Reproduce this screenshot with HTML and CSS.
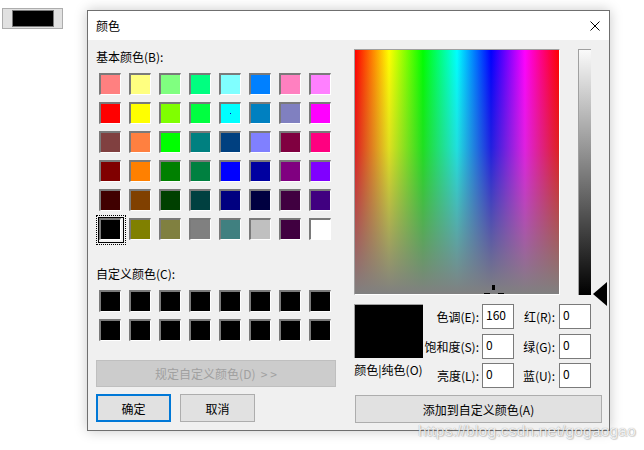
FILE: index.html
```html
<!DOCTYPE html>
<html lang="zh-CN">
<head>
  <meta charset="UTF-8">
  <meta name="viewport" content="width=device-width, initial-scale=1.0">
  <title>颜色</title>
  <link rel="stylesheet" href="styles.css">
</head>
<body>
  <div class="desk">
    <div class="mini">
      <div class="mini-color"></div>
    </div>

    <div class="dialog">
      <div class="titlebar">
        <span>颜色</span>
        <svg class="close" width="10" height="10" viewBox="0 0 10 10">
          <path d="M0.5 0.5 L9.5 9.5 M9.5 0.5 L0.5 9.5" stroke="#000" stroke-width="1"/>
        </svg>
      </div>

      <div class="dlg-body">
        <div class="left">
          <div class="label">基本颜色(B):</div>
          <div class="swatches" id="basicColors"></div>
          <div class="label custom-label">自定义颜色(C):</div>
          <div class="swatches" id="customColors"></div>
          <button class="btn wide" disabled>规定自定义颜色(D)&nbsp;&nbsp;&gt; &gt;</button>
          <div class="btn-row">
            <button class="btn default">确定</button>
            <button class="btn">取消</button>
          </div>
        </div>

        <div class="right">
          <div class="picker">
            <div class="spectrum">
              <span class="cross cross-v"></span>
              <span class="cross cross-l"></span>
              <span class="cross cross-r"></span>
            </div>
            <div class="lum-wrap">
              <div class="lum"></div>
              <div class="arrow"></div>
            </div>
          </div>

          <div class="values">
            <div class="preview-col">
              <div class="preview"></div>
              <div class="preview-label">颜色|纯色(O)</div>
            </div>
            <div class="fields">
              <label>色调(E):</label><input value="160">
              <label>红(R):</label><input value="0">
              <label>饱和度(S):</label><input value="0">
              <label>绿(G):</label><input value="0">
              <label>亮度(L):</label><input value="0">
              <label>蓝(U):</label><input value="0">
            </div>
          </div>

          <button class="btn add">添加到自定义颜色(A)</button>
        </div>
      </div>
    </div>

    <div class="watermark">https://blog.csdn.net/gogaogao</div>
  </div>

  <script>
    const basicColors = [
      "#ff8080", "#ffff80", "#80ff80", "#00ff80", "#80ffff", "#0080ff", "#ff80c0", "#ff80ff",
      "#ff0000", "#ffff00", "#80ff00", "#00ff40", "#00ffff", "#0080c0", "#8080c0", "#ff00ff",
      "#804040", "#ff8040", "#00ff00", "#008080", "#004080", "#8080ff", "#800040", "#ff0080",
      "#800000", "#ff8000", "#008000", "#008040", "#0000ff", "#0000a0", "#800080", "#8000ff",
      "#400000", "#804000", "#004000", "#004040", "#000080", "#000040", "#400040", "#400080",
      "#000000", "#808000", "#808040", "#808080", "#408080", "#c0c0c0", "#400040", "#ffffff"
    ];

    const fillSwatches = (container, colors, selected) => {
      colors.forEach((color, i) => {
        const cell = document.createElement("div");
        cell.className = "cell" + (i === selected ? " selected" : "");
        const swatch = document.createElement("div");
        swatch.className = "swatch" + (i === 12 && selected >= 0 ? " dot" : "");
        swatch.style.backgroundColor = color;
        cell.appendChild(swatch);
        container.appendChild(cell);
      });
    };

    fillSwatches(document.getElementById("basicColors"), basicColors, 40);
    fillSwatches(document.getElementById("customColors"), new Array(16).fill("#000000"), -1);
  </script>
</body>
</html>
```

FILE: styles.css
```css
body {
  margin: 0;
  background-color: #fff;
  font-family: "Noto Sans CJK SC", "Liberation Sans", sans-serif;
  font-size: 12px;
  color: #000;
}

.desk {
  position: relative;
  display: flex;
  align-items: flex-start;
  width: 644px;
  height: 450px;
}

.mini {
  margin: 8px 0 0 2px;
  width: 61px;
  height: 21px;
  box-sizing: border-box;
  background-color: #e1e1e1;
  border: 1px solid #adadad;
  padding: 1px 0 0 9px;
}

.mini-color {
  width: 42px;
  height: 17px;
  box-sizing: border-box;
  background-color: #000;
  border: 1px solid #7a7a7a;
}

/* Dialog window */
.dialog {
  margin: 10px 0 0 24px;
  width: 523px;
  height: 421px;
  box-sizing: border-box;
  border: 1px solid #6f6f6f;
  background-color: #f0f0f0;
  box-shadow: 0 0 12px rgba(0, 0, 0, 0.22);
  display: flex;
  flex-direction: column;
}

.titlebar {
  height: 29px;
  background-color: #fff;
  display: flex;
  align-items: center;
  justify-content: space-between;
  padding: 0 9px 0 8px;
}

.titlebar span {
  line-height: 16px;
}

.dlg-body {
  display: flex;
  padding: 9px 0 0 8px;
}

.left {
  width: 240px;
  display: flex;
  flex-direction: column;
}

.label {
  height: 16px;
  line-height: 16px;
}

.custom-label {
  margin-top: 22px;
}

.swatches {
  margin-top: 5px;
  display: grid;
  grid-template-columns: repeat(8, 30px);
  grid-auto-rows: 29px;
}

.cell {
  position: relative;
  width: 30px;
  height: 29px;
}

.swatch {
  position: relative;
  margin: 3px 0 0 3px;
  width: 22px;
  height: 22px;
  box-sizing: border-box;
  border-top: 2px solid #7a7a7a;
  border-left: 2px solid #7a7a7a;
  border-right: 1px solid #fff;
  border-bottom: 1px solid #fff;
}

.swatch.dot::after {
  content: "";
  position: absolute;
  left: 9px;
  top: 9px;
  width: 1px;
  height: 1px;
  background-color: #0000c0;
}

.cell.selected::before {
  content: "";
  position: absolute;
  left: 0;
  top: 0;
  width: 30px;
  height: 30px;
  box-sizing: border-box;
  border: 1px dotted #000;
}

.cell.selected::after {
  content: "";
  position: absolute;
  left: 2px;
  top: 2px;
  width: 26px;
  height: 26px;
  box-sizing: border-box;
  border: 1px solid #000;
}

.btn {
  font-family: inherit;
  font-size: 12px;
  color: #000;
  background-color: #e1e1e1;
  border: 1px solid #adadad;
  padding: 0;
  height: 28px;
  cursor: pointer;
}

.btn.wide {
  margin-top: 15px;
  height: 27px;
  background-color: #cccccc;
  border-color: #bfbfbf;
  color: #a0a0a0;
  cursor: default;
}

.btn-row {
  margin-top: 7px;
  display: flex;
  gap: 9px;
}

.btn-row .btn {
  width: 75px;
}

.btn.default {
  border: 2px solid #0078d7;
}

/* Right side */
.right {
  margin-left: 18px;
  display: flex;
  flex-direction: column;
}

.picker {
  display: flex;
}

.spectrum {
  position: relative;
  overflow: hidden;
  width: 206px;
  height: 246px;
  box-sizing: border-box;
  border-top: 1px solid #a0a0a0;
  border-left: 1px solid #a0a0a0;
  border-right: 1px solid #fff;
  border-bottom: 1px solid #fff;
  background:
    linear-gradient(to bottom, rgba(128, 128, 128, 0) 0%, rgba(128, 128, 128, 0.25) 40%, #808080 100%),
    linear-gradient(to right, #ff0000 0%, #ffff00 16.7%, #00ff00 33.3%, #00ffff 50%, #0000ff 66.7%, #ff00ff 83.3%, #ff0000 100%);
}

.cross {
  position: absolute;
  background-color: #000;
}

.cross-v {
  left: 137px;
  top: 235px;
  width: 3px;
  height: 5px;
}

.cross-l {
  left: 129px;
  top: 243px;
  width: 6px;
  height: 3px;
}

.cross-r {
  left: 143px;
  top: 243px;
  width: 6px;
  height: 3px;
}

.lum-wrap {
  position: relative;
  margin-left: 18px;
  width: 30px;
  height: 246px;
}

.lum {
  width: 13px;
  height: 246px;
  box-sizing: border-box;
  border-top: 1px solid #a0a0a0;
  border-left: 1px solid #a0a0a0;
  background: linear-gradient(to bottom, #fafafa, #000);
}

.arrow {
  position: absolute;
  left: 15px;
  top: 233px;
  width: 0;
  height: 0;
  border-top: 12px solid transparent;
  border-bottom: 12px solid transparent;
  border-right: 14px solid #000;
}

.values {
  margin-top: 9px;
  display: flex;
}

.preview-col {
  width: 69px;
  display: flex;
  flex-direction: column;
  align-items: center;
}

.preview {
  width: 69px;
  height: 54px;
  box-sizing: border-box;
  background-color: #000;
  border-top: 1px solid #a0a0a0;
  border-left: 1px solid #a0a0a0;
}

.preview-label {
  margin-top: 4px;
  line-height: 16px;
  white-space: nowrap;
}

.fields {
  display: grid;
  grid-template-columns: 59px 32px 45px 32px;
  grid-auto-rows: 25px;
  row-gap: 4.5px;
}

.fields label {
  text-align: right;
  padding-right: 3px;
  line-height: 25px;
  white-space: nowrap;
}

.fields label:nth-of-type(even) {
  padding-right: 4px;
}

.fields input {
  width: 32px;
  height: 25px;
  box-sizing: border-box;
  border: 1px solid #7a7a7a;
  background-color: #fff;
  font-family: inherit;
  font-size: 12px;
  padding: 0 0 4px 3px;
  margin: 0;
  outline: none;
}

.btn.add {
  margin: 7px 0 0 1px;
  width: 247px;
}

.watermark {
  position: absolute;
  left: 418px;
  top: 422px;
  font-family: "Liberation Sans", sans-serif;
  font-size: 15.5px;
  letter-spacing: 0.2px;
  color: rgba(255, 255, 255, 0.85);
  text-shadow: 0 0 1px rgba(0, 0, 0, 0.4), 1px 1px 1px rgba(0, 0, 0, 0.15);
  white-space: nowrap;
}
```
